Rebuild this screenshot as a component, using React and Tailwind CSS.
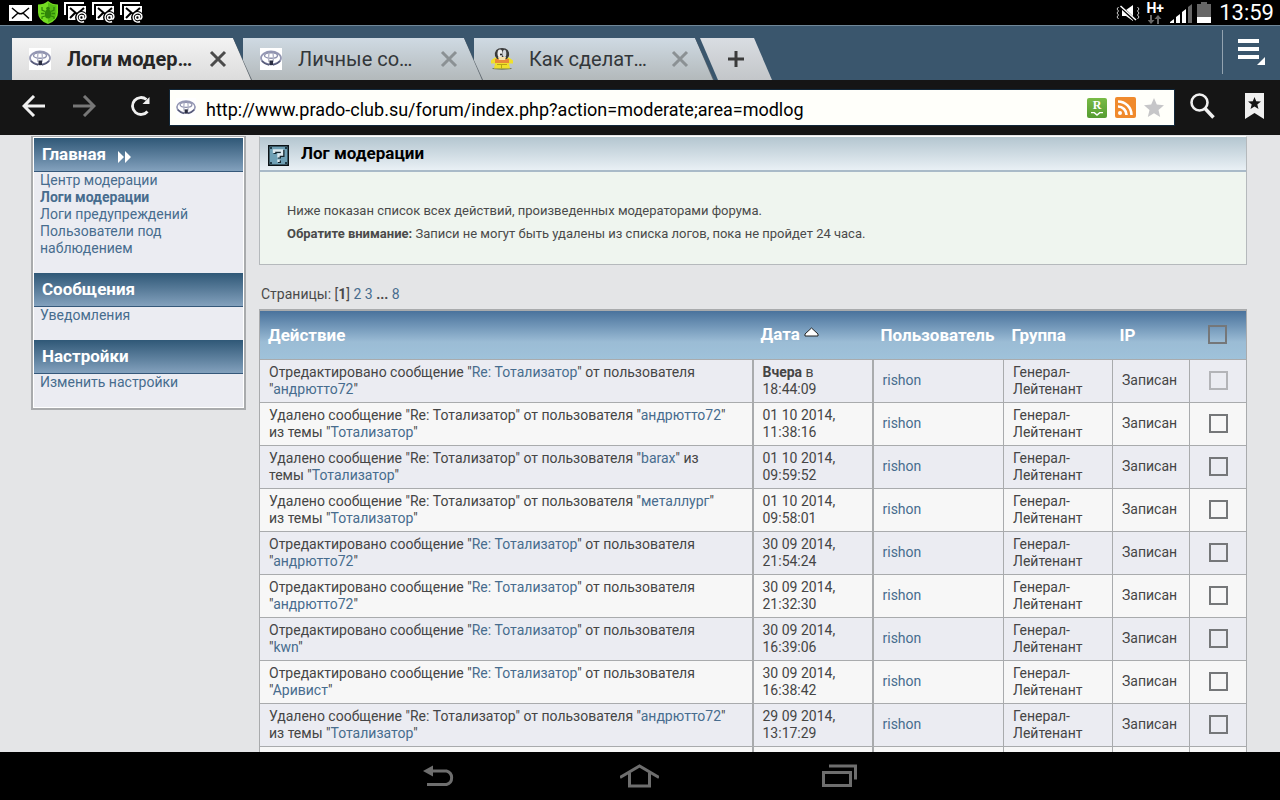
import React, { useState } from 'react';

const sideSections = [
    {
        title: 'Главная',
        arrow: true,
        links: ['Центр модерации', 'Логи модерации', 'Логи предупреждений', 'Пользователи под наблюдением'],
    },
    { title: 'Сообщения', links: ['Уведомления'] },
    { title: 'Настройки', links: ['Изменить настройки'] },
];

const logs = [
    { kind: 'edit', user: 'андрютто72', day: 'Вчера', time: '18:44:09' },
    { kind: 'delete', user: 'андрютто72', day: '01 10 2014,', time: '11:38:16' },
    { kind: 'delete', user: 'barax', day: '01 10 2014,', time: '09:59:52' },
    { kind: 'delete', user: 'металлург', day: '01 10 2014,', time: '09:58:01' },
    { kind: 'edit', user: 'андрютто72', day: '30 09 2014,', time: '21:54:24' },
    { kind: 'edit', user: 'андрютто72', day: '30 09 2014,', time: '21:32:30' },
    { kind: 'edit', user: 'kwn', day: '30 09 2014,', time: '16:39:06' },
    { kind: 'edit', user: 'Аривист', day: '30 09 2014,', time: '16:38:42' },
    { kind: 'delete', user: 'андрютто72', day: '29 09 2014,', time: '13:17:29' },
    { kind: 'edit', user: 'kwn', day: '29 09 2014,', time: '12:40:11' },
];

const ToyotaIcon = ({ className }) => (
    <svg viewBox="0 0 22 22" className={className} fill="none" aria-hidden="true">
        <rect width="22" height="22" fill="#fff" />
        <ellipse cx="11" cy="10" rx="10" ry="6.500" stroke="#9497b3" strokeWidth="1.800" />
        <ellipse cx="11" cy="7.500" rx="6.500" ry="2.800" stroke="#8f92ae" strokeWidth="1.400" />
        <path d="M9 5q-1 5 0 9M13 5q1 5 0 9" stroke="#b3b5c8" strokeWidth="1.400" />
        <path d="M2 13q3 3.500 7 4M20 13q-3 3.500-7 4" stroke="#565a78" strokeWidth="1.500" />
        <path d="M9.500 12.500h3.500v4.500H9.500z" fill="#2a2d40" />
    </svg>
);

const CartoonIcon = ({ className }) => (
    <svg viewBox="0 0 22 22" className={className} aria-hidden="true">
        <ellipse cx="11" cy="20.500" rx="10" ry="1.200" fill="#6f7a55" />
        <path d="M4 9.500h14l4 3v3h-4l1 5H3l1-5H0v-3z" fill="#f0e02a" />
        <path d="M4 11h14v4H4z" fill="#e8893a" />
        <path d="M4 8q-1-8 7-8t7 8l-2 3H6z" fill="#3a3a3a" />
        <ellipse cx="9" cy="5.500" rx="2.500" ry="4" fill="#ececec" />
        <ellipse cx="13.500" cy="5.500" rx="1.800" ry="3.800" fill="#d2d6dc" />
        <circle cx="10" cy="6.500" r="1" fill="#111" />
        <path d="M7 9h8l-1 3H8z" fill="#f6dfa8" />
        <path d="M6 16.500h10M10.500 17v3.500" stroke="#b7a715" />
    </svg>
);

const MailAtIcon = () => (
    <svg viewBox="0 0 24 22" className="h-[22px] w-6" fill="none" aria-hidden="true">
        <path d="M1 13V1h19" stroke="#fff" strokeWidth="2" />
        <path d="M4 4h18v14H4z" fill="#fff" />
        <path d="M6 6l7 6 7-6M6 16l5-5" stroke="#000" strokeWidth="2" />
        <circle cx="17.500" cy="15.500" r="6.500" fill="#000" />
        <circle cx="17.500" cy="15.500" r="2" stroke="#fff" strokeWidth="1.500" />
        <path d="M19.500 13.200v3q.500 1.500 1.800.500 1.200-1.800.200-4a4.600 4.600 0 1 0-1.500 6.800" stroke="#fff" strokeWidth="1.500" />
    </svg>
);

const StatusBar = () => (
    <header className="flex h-[25px] shrink-0 items-center justify-between bg-black pr-1.5 pl-[9px] text-white">
        <div className="flex items-center gap-1">
            <svg viewBox="0 0 23 16" className="h-4 w-[23px]" aria-hidden="true">
                <path d="M0 0h23v16H0z" fill="#fff" />
                <path d="M3 3l6 5q2.500 1.500 5 0l6-5M3 13.500l5.500-5M20 13.500l-5.500-5" fill="none" stroke="#000" strokeWidth="1.500" />
            </svg>
            <svg viewBox="0 0 22 23" className="mx-px h-[23px] w-[22px]" fill="none" aria-hidden="true">
                <path d="M11 0q4 3.500 10 3.500v8q0 8-10 11.500Q1 19.500 1 11.500v-8Q7 3.500 11 0z" fill="#74dc22" />
                <path d="M11 1.500q4 3 8.500 3v7q0 7-8.500 10z" fill="#55bd14" />
                <ellipse cx="11" cy="13" rx="3.200" ry="4.500" fill="#2f8508" />
                <circle cx="11" cy="7.500" r="1.800" fill="#2f8508" />
                <path d="M8 10.500L5 9V6M14 10.500L17 9V6M7.500 12.500H4M14.500 12.500H18M8 15l-3 1v2M14 15l3 1v2" stroke="#2f8508" strokeWidth="1.300" />
            </svg>
            <MailAtIcon />
            <MailAtIcon />
            <MailAtIcon />
        </div>
        <div className="flex items-center gap-1">
            <svg viewBox="0 0 24 16" className="h-4 w-6" fill="none" aria-hidden="true">
                <path d="M2.500 2L1 4l1.500 2L1 8l1.500 2L1 12l1.500 2M21.500 2L23 4l-1.500 2L23 8l-1.500 2 1.500 2-1.500 2" stroke="#ccc" />
                <path d="M6 5h4l7-5v16l-7-5H6z" fill="#fff" />
                <path d="M4.500 1.500l15 14" stroke="#000" strokeWidth="3" />
                <path d="M4.500 1l15.500 14" stroke="#fff" strokeWidth="1.500" />
            </svg>
            <div className="flex w-[22px] flex-col items-center">
                <span className="text-sm leading-[13px] font-bold">H+</span>
                <svg viewBox="0 0 14 9" className="h-[9px] w-3.5" fill="#686868" aria-hidden="true">
                    <path d="M2 0h2v5h2.500L3 9-.5 5H2zM9 9h2V4h2.500L10 0 6.500 4H9z" />
                </svg>
            </div>
            <svg viewBox="0 0 23 20" className="h-5 w-[23px]" aria-hidden="true">
                <path d="M0 20v-1l4-3v4zM6 20v-6l4-3v9zM12 20V9l4-3v14z" fill="#fff" />
                <path d="M18 20V4l4-3v19z" fill="#666" />
            </svg>
            <svg viewBox="0 0 14 21" className="h-[21px] w-3.5" aria-hidden="true">
                <path d="M4 0h6v2h4v19H0V2h4z" fill="#666" />
                <path d="M0 15h14v6H0z" fill="#fff" />
            </svg>
            <time className="pl-1 text-[22px] leading-6">13:59</time>
        </div>
    </header>
);

const BrowserTab = ({ title, icon, active, className }) => (
    <div className={`relative h-[42px] w-60 bg-[#5d666d] [clip-path:polygon(0_0,221px_0,100%_100%,0_100%)] ${className}`}>
        <div
            className={`mr-px flex h-full items-center bg-linear-to-b pr-6 pl-[17px] [clip-path:polygon(0_0,221px_0,100%_100%,0_100%)] ${
                active ? 'from-[#f3f3f3] to-[#dcdcdc]' : 'from-[#cfdae3] to-[#b3b9bb]'
            }`}
        >
            {icon}
            <button
                className={`ml-4 flex-1 text-left text-xl whitespace-nowrap ${
                    active ? 'font-bold text-[#262626]' : 'text-[#33373a]'
                }`}
            >
                {title}
            </button>
            <button aria-label="Закрыть вкладку" className={active ? 'text-[#4b4b4b]' : 'text-[#8b9194]'}>
                <svg viewBox="0 0 18 18" className="h-[18px] w-[18px]" stroke="currentColor" strokeWidth="3">
                    <path d="M2 2l14 14M16 2L2 16" />
                </svg>
            </button>
        </div>
    </div>
);

const TabStrip = () => (
    <div className="flex h-[55px] shrink-0 items-end border-t border-[#6f8798] bg-[#3a566d] pl-3">
        <BrowserTab active className="z-20" title="Логи модер…" icon={<ToyotaIcon className="h-[22px] w-[22px]" />} />
        <BrowserTab className="z-10 -ml-[9px]" title="Личные со…" icon={<ToyotaIcon className="h-[22px] w-[22px]" />} />
        <BrowserTab className="z-0 -ml-[9px]" title="Как сделат…" icon={<CartoonIcon className="h-[22px] w-[22px]" />} />
        <button
            aria-label="Новая вкладка"
            className="-ml-3.5 flex h-[42px] w-[72px] items-center justify-center bg-linear-to-b from-[#d9dde2] to-[#c3c6c9] [clip-path:polygon(0_0,54px_0,100%_100%,18px_100%)]"
        >
            <svg viewBox="0 0 16 16" className="h-4 w-4" stroke="#3b3b3b" strokeWidth="3">
                <path d="M8 0v16M0 8h16" />
            </svg>
        </button>
        <div className="mr-3.5 mb-1.5 ml-auto flex h-11 items-center border-l border-[#93a3b0] pl-[15px]">
            <button aria-label="Меню">
                <svg viewBox="0 0 28 27" className="h-[27px] w-7" fill="#fff">
                    <path d="M0 0h21v4H0zM0 8h21v4H0zM0 16h21v4H0zM27 18v8h-8z" />
                </svg>
            </button>
        </div>
    </div>
);

const Toolbar = () => (
    <div className="flex h-[55px] shrink-0 items-center bg-[#151515] pr-4 pl-[22px]">
        <div className="flex w-[147px] items-center pb-1">
            <button aria-label="Назад" className="mr-7 text-[#f0f0f0]">
                <svg viewBox="0 0 23 22" className="h-[22px] w-[23px]" fill="none" stroke="currentColor" strokeWidth="3">
                    <path d="M12 1L2 11l10 10M2 11h21" />
                </svg>
            </button>
            <button aria-label="Вперёд" className="mr-[34px] text-[#777]">
                <svg viewBox="0 0 23 22" className="h-[22px] w-[23px]" fill="none" stroke="currentColor" strokeWidth="3">
                    <path d="M11 1l10 10-10 10M21 11H0" />
                </svg>
            </button>
            <button aria-label="Обновить" className="text-[#f0f0f0]">
                <svg viewBox="0 0 20 20" className="h-5 w-5" fill="none" stroke="currentColor" strokeWidth="2.800">
                    <path d="M17.500 15.500a8.500 8.500 0 1 1-1-12" />
                    <path d="M19.500 1v7h-7z" fill="currentColor" stroke="none" />
                </svg>
            </button>
        </div>
        <div className="flex h-[37px] flex-1 items-center border border-[#12283a] bg-[#fffffa] pr-2.5 pl-1.5">
            <ToyotaIcon className="h-5 w-5" />
            <input
                aria-label="Адрес"
                className="ml-2.5 min-w-0 flex-1 bg-transparent pt-1 text-lg leading-7 text-black outline-none"
                defaultValue="http://www.prado-club.su/forum/index.php?action=moderate;area=modlog"
            />
            <div className="flex items-center gap-2">
                <button
                    aria-label="Режим чтения"
                    className="flex h-5 w-5 flex-col items-center rounded-xs bg-linear-to-b from-[#79bb45] to-[#559c31] text-white"
                >
                    <span className="font-['Liberation_Serif',serif] text-xs leading-[14px] font-bold">R</span>
                    <svg viewBox="0 0 12 4" className="h-1 w-3" fill="none" stroke="currentColor" strokeWidth="1.500">
                        <path d="M0 .5h3l3 2.500 3-2.500h3" />
                    </svg>
                </button>
                <button aria-label="RSS">
                    <svg viewBox="0 0 21 21" className="h-[21px] w-[21px]" fill="none" stroke="#fff" strokeWidth="2.600">
                        <rect width="21" height="21" rx="2" fill="#f08a2c" stroke="none" />
                        <path d="M3 9.500a8.500 8.500 0 0 1 8.500 8.500M3 4.500A13.500 13.500 0 0 1 16.500 18" />
                        <circle cx="5" cy="16" r="2" fill="#fff" stroke="none" />
                    </svg>
                </button>
                <button aria-label="В закладки">
                    <svg viewBox="0 0 20 19" className="h-[19px] w-5" fill="#c6c6c8">
                        <path d="M10 0l2.800 6.500 7.200.700-5.500 4.700 1.700 7.100L10 15.300 3.800 19l1.700-7.100L0 7.200l7.200-.700z" />
                    </svg>
                </button>
            </div>
        </div>
        <button aria-label="Поиск" className="mb-1 ml-[15px]">
            <svg viewBox="0 0 25 26" className="h-[26px] w-[25px]" fill="none" stroke="#f0f0f0">
                <circle cx="9.500" cy="9.500" r="8" strokeWidth="2.600" />
                <path d="M15 15.500l8.500 9" strokeWidth="3.500" />
            </svg>
        </button>
        <button aria-label="Закладки" className="mb-1 ml-[30px]">
            <svg viewBox="0 0 19 26" className="h-[26px] w-[19px]">
                <path d="M0 0h19v26l-9.500-6L0 26z" fill="#f0f0f0" />
                <path d="M9.500 4l1.700 4.200 4.800.300-3.700 3 1.200 4.500-4-2.500-4 2.500 1.200-4.500-3.700-3 4.800-.300z" fill="#151515" />
            </svg>
        </button>
    </div>
);

const Sidebar = () => (
    <aside className="w-[215px] shrink-0 self-start border-2 border-t border-[#a9abad] bg-[#ebecf2]">
        <div className="border border-white">
            {sideSections.map((section) => (
                <section key={section.title} className="pb-4">
                    <h2 className="flex h-[34px] items-center border-b border-[#35587a] bg-linear-to-b from-[#2f5877] to-[#83a1bd] pl-2 text-[17px] font-bold text-white">
                        {section.title}
                        {section.arrow && (
                            <svg viewBox="0 0 13 12" className="mt-1 ml-3 h-3 w-[13px]" fill="#fff" aria-hidden="true">
                                <path d="M0 0l6 6-6 6zM7 0l6 6-6 6z" />
                            </svg>
                        )}
                    </h2>
                    <ul className="px-1.5 text-sm leading-[17px] text-[#476c8e]">
                        {section.links.map((link) => (
                            <li key={link} className={link === 'Логи модерации' ? 'font-bold' : ''}>
                                <a href="#">{link}</a>
                            </li>
                        ))}
                    </ul>
                </section>
            ))}
        </div>
    </aside>
);

const Link = ({ children }) => (
    <a href="#" className="text-[#476c8e]">
        {children}
    </a>
);

const CheckBox = ({ label, faded, ...props }) => (
    <input
        type="checkbox"
        aria-label={label}
        className={`mx-auto block h-[19px] w-[19px] appearance-none border-2 checked:bg-[#476c8e] ${
            faded ? 'border-[#b3b4b8]' : 'border-[#757779]'
        }`}
        {...props}
    />
);

const LogRow = ({ log, index, checked, onToggle }) => (
    <tr className={`border-t border-[#a9abad] ${index % 2 ? 'bg-[#f7f7f7]' : 'bg-[#ebecf2]'}`}>
        <td className="py-1 pr-6 pl-[9px]">
            {log.kind === 'edit' ? (
                <>
                    Отредактировано сообщение "<Link>Re: Тотализатор</Link>" от пользователя "<Link>{log.user}</Link>"
                </>
            ) : (
                <>
                    Удалено сообщение "Re: Тотализатор" от пользователя "<Link>{log.user}</Link>" из темы "
                    <Link>Тотализатор</Link>"
                </>
            )}
        </td>
        <td className="border-l-2 border-[#a9abad] py-1 pl-[9px]">
            {log.day === 'Вчера' ? (
                <>
                    <b>Вчера</b> в
                </>
            ) : (
                log.day
            )}
            <br />
            {log.time}
        </td>
        <td className="border-l-2 border-[#a9abad] pl-[9px]">
            <Link>rishon</Link>
        </td>
        <td className="border-l border-[#a9abad] pl-[9px]">
            Генерал-
            <br />
            Лейтенант
        </td>
        <td className="border-l border-[#a9abad] pl-[9px]">Записан</td>
        <td className="border-l border-[#a9abad]">
            <CheckBox label={`Выбрать ${log.time}`} faded={index === 0} checked={checked} onChange={onToggle} />
        </td>
    </tr>
);

const ModLog = () => {
    const [selected, setSelected] = useState([]);

    const toggle = (i) => {
        setSelected((prev) => (prev.includes(i) ? prev.filter((n) => n !== i) : [...prev, i]));
    };

    return (
        <main className="min-w-0 flex-1">
            <section className="border border-[#b5b9bc] border-t-white bg-[#eff5ef]">
                <h1 className="flex h-[35px] items-center border-b-2 border-[#a9bac8] bg-linear-to-b from-[#b4c6d0] to-[#e9f0f5] pl-2 text-[17px] font-bold text-black">
                    <svg viewBox="0 0 21 21" className="mt-1 mr-3 h-[21px] w-[21px]" aria-hidden="true">
                        <path d="M0 0h21v21H0z" fill="#0b1216" />
                        <path d="M1.500 1.500h18v18h-18z" fill="#6fa0b5" />
                        <path d="M2 2h2v2H2zM17 2h2v2h-2zM2 17h2v2H2zM17 17h2v2h-2z" fill="#213c49" />
                        <path d="M7 9V6.500h8v4h-3.500v3M11.500 15.500v2.500" fill="none" stroke="#16262e" strokeWidth="3" />
                        <path d="M6 8V5.500h8v4h-3.500v3M10.500 14.500v2.500" fill="none" stroke="#dce9ef" strokeWidth="2.400" />
                    </svg>
                    Лог модерации
                </h1>
                <div className="px-[27px] pt-[27px] pb-[19px] text-[13px] leading-[23px] text-[#4a4a4a]">
                    <p>Ниже показан список всех действий, произведенных модераторами форума.</p>
                    <p>
                        <b>Обратите внимание:</b> Записи не могут быть удалены из списка логов, пока не пройдет 24 часа.
                    </p>
                </div>
            </section>

            <nav className="pt-5 pb-1.5 pl-0.5 text-sm leading-[18px] text-[#4a4a4a]">
                Страницы: [<b>1</b>] <Link>2</Link> <Link>3</Link> <b>...</b> <Link>8</Link>
            </nav>

            <table className="w-full table-fixed border-collapse border border-t-2 border-[#a9abad] text-sm leading-[17px] text-[#454545]">
                <colgroup>
                    <col />
                    <col className="w-[120px]" />
                    <col className="w-[131px]" />
                    <col className="w-[109px]" />
                    <col className="w-[77px]" />
                    <col className="w-[57px]" />
                </colgroup>
                <thead>
                    <tr className="h-[49px] bg-linear-to-b from-[#47709a] via-[#9bbcd5] via-65% to-[#9fc2da] text-left text-[17px] text-white">
                        <th className="pt-0.5 pl-2">Действие</th>
                        <th className="pt-0.5 pl-2 whitespace-nowrap">
                            Дата
                            <svg viewBox="0 0 15 10" className="mb-2 ml-1 inline h-2.5 w-[15px]" aria-hidden="true">
                                <path d="M7.500 1L14 7v2H1V7z" fill="#fff" stroke="#222" />
                            </svg>
                        </th>
                        <th className="pt-0.5 pl-2">Пользователь</th>
                        <th className="pt-0.5 pl-2">Группа</th>
                        <th className="pt-0.5 pl-[7px]">IP</th>
                        <th>
                            <CheckBox
                                label="Выбрать все"
                                checked={selected.length === logs.length}
                                onChange={(e) => setSelected(e.target.checked ? logs.map((_, i) => i) : [])}
                            />
                        </th>
                    </tr>
                </thead>
                <tbody>
                    {logs.map((log, i) => (
                        <LogRow
                            key={log.time}
                            log={log}
                            index={i}
                            checked={selected.includes(i)}
                            onToggle={() => toggle(i)}
                        />
                    ))}
                </tbody>
            </table>
        </main>
    );
};

const NavBar = () => (
    <footer className="flex h-12 shrink-0 items-center justify-center bg-black pr-0.5 text-[#6e6e6e]">
        <button aria-label="Назад" className="flex w-[200px] justify-center">
            <svg viewBox="0 0 32 22" className="h-[22px] w-8" fill="none" stroke="currentColor" strokeWidth="3">
                <path d="M9 6h14.500a7 7 0 0 1 0 13.500H4" />
                <path d="M0 6l10-5.500v11z" fill="currentColor" stroke="none" />
            </svg>
        </button>
        <button aria-label="Домой" className="flex w-[200px] justify-center">
            <svg viewBox="0 0 39 24" className="h-6 w-[39px]" fill="none" stroke="currentColor" strokeWidth="3">
                <path d="M0 13.500L19.500 2 39 13.500M9.500 9v13h20V9" />
            </svg>
        </button>
        <button aria-label="Недавние" className="flex w-[200px] justify-center">
            <svg viewBox="0 0 35 24" className="h-6 w-[35px]" fill="none" stroke="currentColor" strokeWidth="3">
                <path d="M1.500 8.500h27v13h-27zM7 2h26.500v13.500" />
            </svg>
        </button>
    </footer>
);

const App = () => (
    <div className="flex h-screen flex-col overflow-hidden bg-[#e4e5e7] font-[Roboto,sans-serif]">
        <StatusBar />
        <TabStrip />
        <Toolbar />
        <div className="flex min-h-0 flex-1 gap-[13px] overflow-hidden pt-px pr-[33px] pl-[31px]">
            <Sidebar />
            <ModLog />
        </div>
        <NavBar />
    </div>
);

export default App;
